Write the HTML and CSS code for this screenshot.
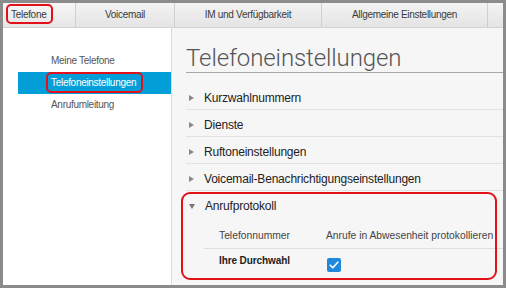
FILE: index.html
```html
<!DOCTYPE html>
<html lang="de">
<head>
<meta charset="utf-8">
<title>Telefoneinstellungen</title>
<link rel="stylesheet" href="styles.css">
</head>
<body>
<div class="frame">
  <nav class="tabs">
    <div class="tab tab-phone active">Telefone</div>
    <div class="tab tab-vm">Voicemail</div>
    <div class="tab tab-im">IM und Verfügbarkeit</div>
    <div class="tab tab-gen">Allgemeine Einstellungen</div>
    <div class="tab tab-more"></div>
  </nav>
  <div class="main">
    <aside class="sidebar">
      <div class="nav-item">Meine Telefone</div>
      <div class="nav-item selected">Telefoneinstellungen</div>
      <div class="nav-item">Anrufumleitung</div>
    </aside>
    <section class="content">
      <h1 class="title">Telefoneinstellungen</h1>
      <div class="acc">
        <div class="acc-row"><span class="tri"></span>Kurzwahlnummern</div>
        <div class="acc-row"><span class="tri"></span>Dienste</div>
        <div class="acc-row"><span class="tri"></span>Ruftoneinstellungen</div>
        <div class="acc-row"><span class="tri"></span>Voicemail-Benachrichtigungseinstellungen</div>
        <div class="acc-row open"><span class="tri down"></span>Anrufprotokoll</div>
        <div class="log-table">
          <div class="log-head">
            <div class="c1">Telefonnummer</div>
            <div class="c2">Anrufe in Abwesenheit protokollieren</div>
          </div>
          <div class="log-body">
            <div class="c1 strong">Ihre Durchwahl</div>
            <div class="c2"><span class="check"><svg width="14" height="14" viewBox="0 0 14 14"><path d="M3.2 7.2 L5.8 9.8 L10.8 4.2" fill="none" stroke="#fff" stroke-width="1.6" stroke-linecap="round" stroke-linejoin="round"/></svg></span></div>
          </div>
        </div>
      </div>
    </section>
  </div>
  <span class="mark mark-tab"></span>
  <span class="mark mark-nav"></span>
  <span class="mark mark-section"></span>
</div>
</body>
</html>
```

FILE: styles.css
```css
* { box-sizing: border-box; }
html, body { margin: 0; padding: 0; }
body {
  background: #8b8b8b;
  width: 506px;
  height: 288px;
  overflow: hidden;
  font-family: "Liberation Sans", Arial, sans-serif;
}
.frame {
  position: relative;
  margin: 3px;
  width: 500px;
  height: 282px;
  background: #fff;
  overflow: hidden;
  display: flex;
  flex-direction: column;
}
.tabs {
  display: flex;
  height: 25px;
  border-bottom: 1px solid #d2d2d2;
  background: linear-gradient(#f3f3f3, #e4e4e4);
  flex: none;
}
.tab {
  height: 24px;
  line-height: 24px;
  font-size: 10px;
  letter-spacing: -0.3px;
  color: #3a3a3a;
  text-align: center;
  border-right: 1px solid #cfcfcf;
  white-space: nowrap;
}
.tab.active {
  background: linear-gradient(#f7f7f7, #e6e6e6);
  text-align: left;
  padding-left: 8px;
}
.tab-phone { width: 73px; }
.tab-vm { width: 99px; }
.tab-im { width: 147px; }
.tab-gen { width: 166px; }
.tab-more { width: 15px; border-right: none; }

.main {
  flex: 1;
  display: flex;
  min-height: 0;
}
.sidebar {
  width: 169px;
  flex: none;
  background: #fff;
  border-right: 1px solid #dadada;
  padding-top: 22px;
  padding-left: 15px;
}
.nav-item {
  height: 22px;
  line-height: 22px;
  font-size: 10px;
  letter-spacing: -0.3px;
  color: #555;
  padding-left: 33px;
}
.nav-item.selected {
  background: #049fd9;
  color: #fff;
}
.content {
  flex: 1;
  background: #f6f6f6;
  padding: 16px 0 0 14px;
}
.title {
  margin: 0;
  font-family: Roboto, "Liberation Sans", sans-serif;
  font-weight: 300;
  font-size: 24px;
  line-height: 28px;
  color: #555;
  border-bottom: 1px solid #a8a8a8;
  letter-spacing: -0.1px;
}
.acc {
  margin-top: 10px;
}
.acc-row {
  display: flex;
  align-items: center;
  height: 27px;
  padding-top: 4px;
  border-bottom: 1px solid #e2e2e2;
  font-size: 12px;
  letter-spacing: -0.2px;
  color: #222;
}
.acc-row.open { border-bottom: none; height: 26px; }
.tri {
  width: 0;
  height: 0;
  margin: 0 10px 0 3px;
  border-left: 5px solid #888;
  border-top: 3.5px solid transparent;
  border-bottom: 3.5px solid transparent;
}
.tri.down {
  margin: 0 10px 0 3px;
  border-top: 5px solid #777;
  border-left: 3px solid transparent;
  border-right: 3px solid transparent;
  border-bottom: none;
}
.log-table {
  margin-left: 18px;
}
.log-head, .log-body {
  display: grid;
  grid-template-columns: 122px 1fr;
}
.log-head {
  height: 32px;
  padding-top: 13px;
  border-bottom: 1px solid #dedede;
  font-size: 10.3px;
  line-height: 12px;
  color: #444;
  white-space: nowrap;
}
.log-head .c1, .log-body .c1 { padding-left: 15px; }
.log-body {
  padding-top: 6px;
  font-size: 10px;
  line-height: 12px;
}
.strong {
  font-weight: bold;
  color: #222;
  letter-spacing: -0.1px;
}
.log-body .c2 { padding-top: 3px; padding-left: 1px; }
.check {
  display: block;
  width: 14px;
  height: 14px;
  border-radius: 2px;
  background: #1e88dd;
}
.check svg { display: block; }

.mark {
  position: absolute;
  border: 2px solid #e3101a;
  pointer-events: none;
}
.mark-tab { left: 3px; top: 1px; width: 47px; height: 20px; border-radius: 5px; }
.mark-nav { left: 43px; top: 69px; width: 97px; height: 21px; border-radius: 5px; }
.mark-section { left: 178px; top: 189px; width: 316px; height: 88px; border-radius: 9px; border-width: 2.5px; }
```
